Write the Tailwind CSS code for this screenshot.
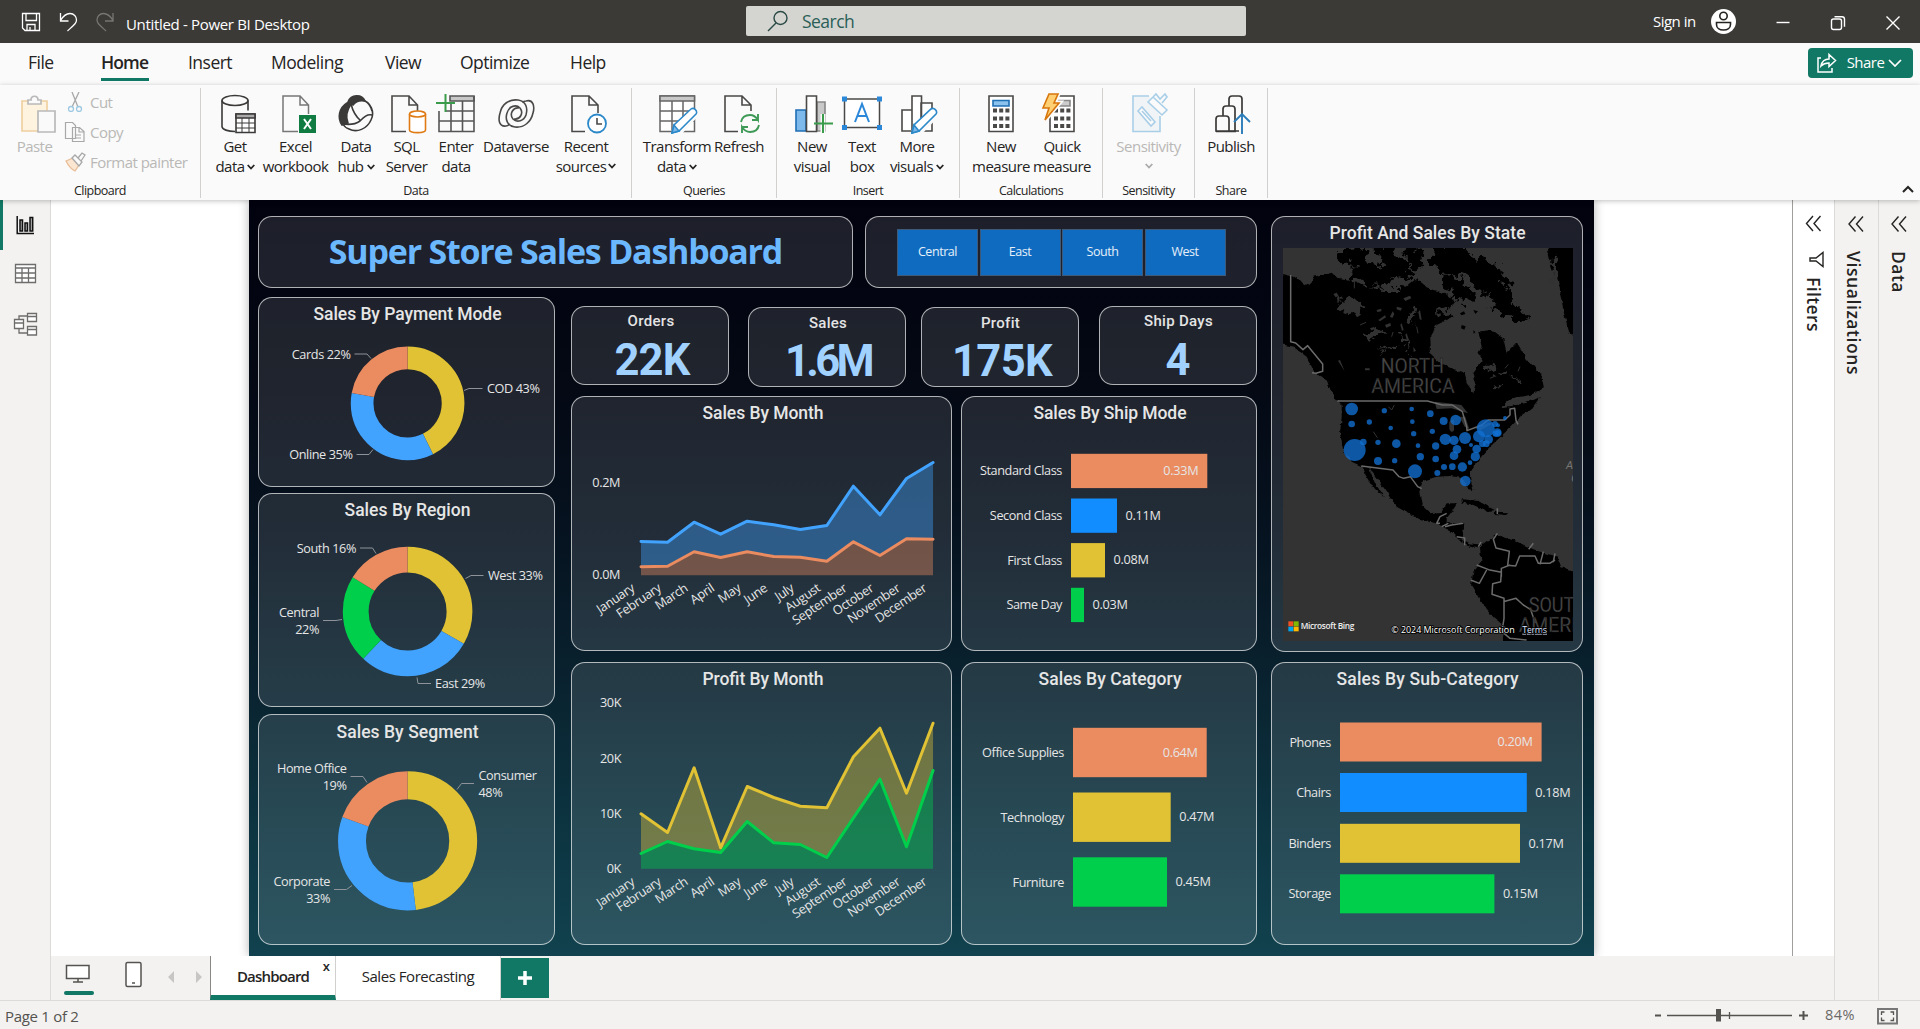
<!DOCTYPE html>
<html lang="en">
<head>
<meta charset="utf-8">
<title>Untitled - Power BI Desktop</title>
<script src="https://cdn.jsdelivr.net/npm/@tailwindcss/browser@4"></script>
</head>
<body class="w-[1920px] h-[1029px] overflow-hidden flex flex-col bg-[#f3f2f1] font-['Open_Sans','Noto_Sans',sans-serif] tracking-[-0.035em] text-[15px] text-[#252423]">

<!-- Title bar -->
<header class="h-[43px] shrink-0 bg-[#3b3a37] text-white flex items-center">
  <div class="w-[746px] flex items-center pl-[20px]">
    <svg class="w-[96px] h-[43px]" viewBox="20 0 96 43" fill="none" stroke="#fff" stroke-width="1.3"><path d="M22.500 13.500h17v17h-14.500l-2.500-2.500zM26 13.500v7h10.500v-7M27 30.500v-6h8v6M30 27v3"/><path d="M60.500 13v8h8M60.500 20.500c3-5 6-7 9.500-7 4 0 6.500 3 6.500 6.500 0 3-2 4.500-9 11"/><path stroke="#777673" d="M113 13v8h-8M113 20.500c-3-5-6-7-9.500-7-4 0-6.500 3-6.500 6.500 0 3 2 4.500 9 11"/></svg>
    <span class="pl-[10px] pt-[6px] whitespace-nowrap tracking-[-0.022em]">Untitled - Power BI Desktop</span>
  </div>
  <div class="w-[500px] h-[30px] rounded-[2px] bg-[#d4d4d1] flex items-center mb-[1px]">
    <svg class="ml-[20px] w-[24px] h-[24px]" viewBox="0 0 24 24" fill="none" stroke="#2b4a45" stroke-width="1.4"><circle cx="14.500" cy="9" r="6.500"/><path d="M10 14L2 22"/></svg>
    <span class="ml-[12px] text-[17.500px] text-[#2a5f57]">Search</span>
  </div>
  <div class="flex-1 flex items-center pl-[407px]">
    <span class="w-[57px] whitespace-nowrap">Sign in</span>
    <svg class="w-[210px] h-[43px]" viewBox="1710 0 210 43" fill="none" stroke="#fff" stroke-width="1.400"><circle cx="1723.500" cy="21.500" r="12.500" fill="#fff" stroke="none"/><g stroke="#252423" stroke-width="1.600"><circle cx="1723.500" cy="16" r="3.700"/><path d="M1716.500 22.500h14v2c0 3.500-3 5.500-7 5.500s-7-2-7-5.500z"/></g><path d="M1776.500 22.500h13"/><rect x="1831.500" y="19" width="10" height="10.500" rx="2"/><path d="M1834.500 16.700h7.500c1.500 0 2.500 1 2.500 2.500v7.500M1886.500 16.500l13 13M1899.500 16.500l-13 13"/></svg>
  </div>
</header>

<!-- Menu tabs -->
<nav class="h-[42px] shrink-0 bg-[#fafafa] flex items-start pl-[28px] pr-[7px] text-[17.500px] leading-[38px] whitespace-nowrap">
  <span class="w-[73px]">File</span>
  <span class="w-[48px] mr-[39px] h-[38px] font-semibold tracking-[-0.05em] border-b-[3px] border-[#117865]">Home</span>
  <span class="w-[83px]">Insert</span>
  <span class="w-[114px] tracking-[-0.028em]">Modeling</span>
  <span class="w-[75px]">View</span>
  <span class="w-[110px]">Optimize</span>
  <span class="flex-1">Help</span>
  <button class="mt-[5px] w-[105px] h-[30px] rounded-[4px] bg-[#117865] text-white text-[15px] leading-none flex items-center pl-[8px]">
    <svg class="w-[22px] h-[22px]" viewBox="0 0 22 22" fill="none" stroke="#fff" stroke-width="1.500"><path d="M5 6H2v14h14v-4M5 14c1-5 4-7 8-7V2.500l6.500 6L13 14.500V11c-4 0-6 1-8 3z"/></svg>
    <span class="ml-[8px] mb-[1px] w-[39px]">Share</span>
    <svg class="ml-[3px] w-[14px] h-[8px]" viewBox="0 0 14 8" fill="none" stroke="#fff" stroke-width="1.700"><path d="M1 1l6 6 6-6"/></svg>
  </button>
</nav>

<!-- Ribbon -->
<section class="relative z-10 h-[115px] shrink-0 bg-[#fafafa] flex items-start pt-[3px] leading-[20px] text-center shadow-[0_1px_5px_rgba(0,0,0,0.25)] whitespace-nowrap">
  <div class="w-[201px] h-[110px] border-r border-[#d2d0ce] flex flex-col">
    <div class="flex h-[94px] shrink-0 text-[#b9b8b6]">
      <div class="w-[60px] pl-[9px] flex flex-col items-center pt-[4px]">
        <svg class="w-[44px] h-[42px]" viewBox="13 92 44 42" fill="none" stroke-width="1.700"><path stroke="#f0cfa0" fill="#fdf3de" d="M22 101h25v30H22z"/><path stroke="#b9b9b9" fill="#fafafa" d="M28 104v-4h3c0-5 7-5 7 0h3v4zM38 111h17v21H38z"/></svg>
        <span class="mt-[1.500px]">Paste</span>
      </div>
      <div class="flex-1 flex flex-col gap-[10px] pt-[4px] pl-[4px] text-left tracking-[-0.035em]">
        <div class="flex items-center"><svg class="w-[22px] h-[20px] mr-[4px]" viewBox="0 0 22 20" fill="none" stroke-width="1.300"><path stroke="#a8a8a8" d="M8 0l6 15M15 0L8 15"/><g stroke="#9dc8e2"><circle cx="7" cy="17" r="2.500"/><circle cx="15" cy="17" r="2.500"/></g></svg>Cut</div>
        <div class="flex items-center"><svg class="w-[22px] h-[20px] mr-[4px]" viewBox="0 0 22 20" fill="#fafafa" stroke="#a8a8a8" stroke-width="1.200"><path d="M1.500.5h7l3 3v13h-10zM8.500 5.500h7l4.500 4v10H8.500zM15 5.500v4.500h5M11 13h6M11 16h6"/></svg>Copy</div>
        <div class="flex items-center"><svg class="w-[22px] h-[20px] mr-[4px]" viewBox="0 0 22 20" fill="#fafafa" stroke-width="1.300"><path stroke="#e9bd98" fill="#fbe6d2" d="M2 9l7-3 6 7-4 6c-4-2-7-6-9-10z"/><path stroke="#a8a8a8" d="M8 6l3-3 7 7-3 4zM14 6l4-5 3 2-4 6"/></svg>Format painter</div>
      </div>
    </div>
    <div class="text-[12.500px] leading-[18px]">Clipboard</div>
  </div>

  <div class="w-[431px] h-[110px] border-r border-[#d2d0ce] flex flex-col">
    <div class="flex h-[94px] shrink-0 pl-[9px] pt-[4px]">
      <div class="w-[50px] flex flex-col items-center"><svg class="w-[44px] h-[42px] mb-[1.500px]" viewBox="0 0 44 42" fill="none" stroke="#3b3a39" stroke-width="1.600"><ellipse cx="22" cy="8.500" rx="13" ry="5"/><path d="M9 8.500v26c0 3 6 5 13 5M35 8.500v10"/><path fill="#fff" d="M23 22h19v18.500H23z"/><path fill="#aaa" d="M23 22h19v4H23z"/><path stroke-width="1" d="M23 31h19M23 36h19M29 26v14M36 26v14"/></svg><span>Get</span><span class="flex items-center">data<svg class="ml-[2px] mt-[2px] w-[8px] h-[6px]" viewBox="0 0 8 6" fill="none" stroke="#252423" stroke-width="1.800"><path d="M.7 1L4 4.500 7.300 1"/></svg></span></div>
      <div class="w-[71px] flex flex-col items-center"><svg class="w-[44px] h-[42px] mb-[1.500px]" viewBox="0 0 44 42" fill="none" stroke="#777" stroke-width="1.500"><path d="M24 39.500H9V4h17l8.500 9v9M26 4v9h8.500"/><path fill="#107c41" stroke="none" d="M25 23h17v18H25z"/><path stroke="#fff" stroke-width="2" d="M30 27l7 10M37 27l-7 10"/></svg><span>Excel</span><span>workbook</span></div>
      <div class="w-[50px] flex flex-col items-center"><svg class="w-[44px] h-[42px] mb-[1.500px]" viewBox="0 0 44 42" fill="none" stroke="#3b3a39" stroke-width="1.600"><path fill="#3b3a39" d="M14 10c3-8 14-8 17-1-5-1-9 0-12 4zM13 11C5 16 3 26 8 33l6-2c-3-7-1-13 3-19z"/><path d="M28 8c9 2 13 12 9 20-4 9-14 13-22 9-3-1-5-3-6-5 7 1 13 0 17-3 4-4 7-7 12-6M17 12c2 8 5 13 10 17M31 9c4 2 6 6 7 10"/></svg><span>Data</span><span class="flex items-center">hub<svg class="ml-[3px] mt-[2px] w-[8px] h-[6px]" viewBox="0 0 8 6" fill="none" stroke="#252423" stroke-width="1.800"><path d="M.7 1L4 4.500 7.300 1"/></svg></span></div>
      <div class="w-[51px] flex flex-col items-center"><svg class="w-[44px] h-[42px] mb-[1.500px]" viewBox="1 0 44 42" fill="none" stroke="#4a4948" stroke-width="1.600"><path d="M22 39.500H8V4h17l8.500 9v6M25 4v9h8.500"/><g stroke="#e07b14" fill="#fff"><path d="M25.500 22v16c0 3.500 16 3.500 16 0V22"/><ellipse cx="33.500" cy="22" rx="8" ry="3"/></g></svg><span>SQL</span><span>Server</span></div>
      <div class="w-[48px] flex flex-col items-center"><svg class="w-[44px] h-[42px] mb-[1.500px]" viewBox="0 0 44 42" fill="none" stroke="#555" stroke-width="1.600"><path fill="#c8c8c8" d="M16 4h24v5H16z"/><path d="M40 4v35.500H5V19M5 29h35M12 19h28M17 12v27M28.500 9v30.500"/><path stroke="#3a9b4b" stroke-width="2" d="M11.500 2v18M2 11h19"/></svg><span>Enter</span><span>data</span></div>
      <div class="w-[72px] flex flex-col items-center"><svg class="w-[44px] h-[42px] mb-[1.500px]" viewBox="0 0 44 42" fill="none" stroke="#4a4948" stroke-width="1.600"><path d="M12 34c-7 1-8-6-6-13C8 12 15 7 24 8c8 1 10 8 8 15-2 6-9 8-13 4-4-5 0-12 6-11M32 9c7-2 9 5 7 12-2 9-9 15-18 14-8-1-10-8-8-14 2-7 9-9 13-5 4 5 0 12-6 11M12 34c2 0 3-1 4-2M32 9c-2 0-3 1-4 1"/></svg><span>Dataverse</span></div>
      <div class="w-[68px] flex flex-col items-center"><svg class="w-[44px] h-[42px] mb-[1.500px]" viewBox="0 0 44 42" fill="none" stroke="#4a4948" stroke-width="1.600"><path d="M21 39.500H8V4h17l9 9v8M25 4v9h9"/><circle cx="33" cy="31.500" r="9" fill="#fff" stroke="#2b88c9" stroke-width="1.800"/><path d="M33 26v6h5"/></svg><span>Recent</span><span class="flex items-center">sources<svg class="ml-[2px] mt-[1px] w-[8px] h-[6px]" viewBox="0 0 8 6" fill="none" stroke="#252423" stroke-width="1.800"><path d="M.7 1L4 4.500 7.300 1"/></svg></span></div>
    </div>
    <div class="text-[12.500px] leading-[18px]">Data</div>
  </div>

  <div class="w-[145px] h-[110px] border-r border-[#d2d0ce] flex flex-col">
    <div class="flex h-[94px] shrink-0 pl-[12px] pt-[4px]">
      <div class="w-[66px] flex flex-col items-center"><svg class="w-[44px] h-[42px] mb-[1.500px]" viewBox="0 0 44 42" fill="none" stroke="#666" stroke-width="1.500"><path fill="#fff" d="M5 4h34.500v35.500H5z"/><path fill="#c8c8c8" d="M5 4h34.500v5H5z"/><path d="M5 19h34M5 29h34M17 9v30M28 9v30"/><path stroke="#fafafa" stroke-width="10" d="M41 19L20 42"/><path fill="#fff" stroke="#2b88c9" d="M17 41l2-8 17-16c3-2 7 2 5 5L24 39z"/><path fill="#7db9ea" stroke="#2b88c9" d="M17 41l2-8 5 6z"/></svg><span>Transform</span><span class="flex items-center">data<svg class="ml-[3px] mt-[2px] w-[8px] h-[6px]" viewBox="0 0 8 6" fill="none" stroke="#252423" stroke-width="1.800"><path d="M.7 1L4 4.500 7.300 1"/></svg></span></div>
      <div class="w-[58px] flex flex-col items-center"><svg class="w-[44px] h-[42px] mb-[1.500px]" viewBox="0 0 44 42" fill="none" stroke="#4a4948" stroke-width="1.600"><path d="M21 39.500H8V4h17l9 9v6M25 4v9h9"/><g stroke="#3f9a57" stroke-width="1.900"><path d="M24 30c1-5 5-7 9-7 4 0 6 2 8 5v-6M41 28h-6M42 33c-1 5-5 7-9 7-4 0-6-2-8-5v6M25 35h6"/></g></svg><span>Refresh</span></div>
    </div>
    <div class="text-[12.500px] leading-[18px]">Queries</div>
  </div>

  <div class="w-[183px] h-[110px] border-r border-[#d2d0ce] flex flex-col">
    <div class="flex h-[94px] shrink-0 pl-[9px] pt-[4px]">
      <div class="w-[52px] flex flex-col items-center"><svg class="w-[44px] h-[42px] mb-[1.500px]" viewBox="0 0 44 42" fill="none" stroke="#4a4948" stroke-width="1.600"><path fill="#c8c8c8" stroke="#888" d="M27 10h8v29h-8z"/><path fill="#7db9ea" stroke="#1f6fb5" d="M6 18h10v21H6z"/><path fill="#fff" d="M16.500 4h10v35.500h-10z"/><path stroke="#fafafa" stroke-width="5" d="M33 22v20"/><path stroke="#3a9b4b" stroke-width="2" d="M33 22v19M24 31.500h19"/></svg><span>New</span><span>visual</span></div>
      <div class="w-[48px] flex flex-col items-center"><svg class="w-[44px] h-[42px] mb-[1.500px]" viewBox="0 0 44 42" fill="none" stroke="#4a4948" stroke-width="1.500"><path fill="#fff" d="M4.500 7h35v28.500h-35z"/><path fill="#2b88d8" stroke="none" d="M2 4.500h5v5H2zM37 4.500h5v5h-5zM2 33h5v5H2zM37 33h5v5h-5z"/><path stroke="#2b88d8" stroke-width="2" d="M15 30l7-18 7 18M17.500 24h9"/></svg><span>Text</span><span>box</span></div>
      <div class="w-[62px] flex flex-col items-center"><svg class="w-[44px] h-[42px] mb-[1.500px]" viewBox="0 0 44 42" fill="none" stroke="#4a4948" stroke-width="1.600"><path fill="#fff" d="M26 11h11v28H26zM7 18h10v21H7zM17 4h9.500v35.500H17z"/><path stroke="#fafafa" stroke-width="10" d="M42 19L20 42"/><path fill="#fff" stroke="#2b88c9" d="M17 41l2-8 17-16c3-2 7 2 5 5L24 39z"/><path fill="#7db9ea" stroke="#2b88c9" d="M17 41l2-8 5 6z"/></svg><span>More</span><span class="flex items-center">visuals<svg class="ml-[3px] mt-[2px] w-[8px] h-[6px]" viewBox="0 0 8 6" fill="none" stroke="#252423" stroke-width="1.800"><path d="M.7 1L4 4.500 7.300 1"/></svg></span></div>
    </div>
    <div class="text-[12.500px] leading-[18px]">Insert</div>
  </div>

  <div class="w-[143px] h-[110px] border-r border-[#d2d0ce] flex flex-col">
    <div class="flex h-[94px] shrink-0 pl-[11px] pt-[4px]">
      <div class="w-[60px] flex flex-col items-center"><svg class="w-[44px] h-[42px] mb-[1.500px]" viewBox="0 0 44 42" fill="none" stroke="#4a4948" stroke-width="1.600"><path fill="#fff" d="M10 4h24v35.500H10z"/><path fill="#8cc2ee" stroke="#1f6fb5" d="M14 8.500h16v5.500H14z"/><path stroke-width="4" stroke-dasharray="4 2.200" d="M14 18.500h17M14 26.500h17M14 34h17"/></svg><span>New</span><span>measure</span></div>
      <div class="w-[62px] flex flex-col items-center"><svg class="w-[44px] h-[42px] mb-[1.500px]" viewBox="0 0 44 42" fill="none" stroke="#4a4948" stroke-width="1.600"><path fill="#fff" d="M10 4h24v35.500H10z"/><path fill="#ccc" stroke="#888" d="M16 8.500h14v5.500H16z"/><path stroke-width="4" stroke-dasharray="4 2.200" d="M14 18.500h17M14 26.500h17M14 34h17"/><path fill="#ffd073" stroke="#fafafa" stroke-width="5" d="M9 2h9l-4 9h5L5 28l4-12H3z"/><path fill="#ffd073" stroke="#d7760c" d="M9 2h9l-4 9h5L5 28l4-12H3z"/></svg><span>Quick</span><span>measure</span></div>
    </div>
    <div class="text-[12.500px] leading-[18px]">Calculations</div>
  </div>

  <div class="w-[92px] h-[110px] border-r border-[#d2d0ce] flex flex-col">
    <div class="flex flex-col items-center h-[94px] shrink-0 pt-[4px] text-[#b9b8b6]"><svg class="w-[44px] h-[42px] mb-[1.500px]" viewBox="2 0 44 42" fill="none" stroke="#a9cfe8" stroke-width="1.600"><path fill="#f0f4f7" d="M24 4H8v35.500h27V24"/><path fill="#fafafa" d="M13 19l4-4 13 15-4 4zM17 19l9 10M23 10l5-5 14 13-5 5zM28 5l3-3 4 5 5-5 2 3-5 6"/></svg><span>Sensitivity</span><svg class="mt-[7px] w-[8px] h-[6px]" viewBox="0 0 8 6" fill="none" stroke="#aaa" stroke-width="1.800"><path d="M.7 1L4 4.500 7.300 1"/></svg></div>
    <div class="text-[12.500px] leading-[18px]">Sensitivity</div>
  </div>

  <div class="w-[73px] h-[110px] border-r border-[#d2d0ce] flex flex-col">
    <div class="flex flex-col items-center h-[94px] shrink-0 pt-[4px]"><svg class="w-[44px] h-[42px] mb-[1.500px]" viewBox="0 0 44 42" fill="#fafafa" stroke="#3b3a39" stroke-width="1.700"><path d="M20 39V7c0-2 1-3 3-3h7c2 0 3 1 3 3v32z"/><path d="M14 39V17c0-2 1-3 3-3h6c2 0 3 1 3 3v22z"/><path d="M7 39V27c0-2 1-3 3-3h7c2 0 3 1 3 3v12zM7 39.500h20"/><path stroke="#fafafa" stroke-width="6" d="M33 24v18"/><path fill="none" stroke="#2b7cb8" stroke-width="1.900" d="M33 42V22M25 30l8-8 8 8"/></svg><span>Publish</span></div>
    <div class="text-[12.500px] leading-[18px]">Share</div>
  </div>
  <svg class="ml-auto mr-[6px] mt-[97px] w-[12px] h-[8px]" viewBox="0 0 12 8" fill="none" stroke="#252423" stroke-width="2"><path d="M1 7l5-5 5 5"/></svg>
</section>

<!-- Work area -->
<main class="h-[800px] shrink-0 flex">
  <aside class="w-[51px] border-r border-[#dddbd9] shrink-0">
    <svg class="w-[50px] h-[150px]" viewBox="0 200 50 150" fill="none"><path fill="#117865" d="M0 200h3v50H0z"/><g stroke="#111" stroke-width="1.500"><path d="M17.200 216v17.500H34"/><path fill="#aaa" d="M20 220h2.500v11H20zM25 223h2.500v8H25zM30 217.500h2.700v13.500H30z"/></g><g stroke="#6e6d6b" stroke-width="1.300"><path fill="#fff" d="M15.500 264.500h20v18h-20z"/><path d="M15.500 268h20M15.500 273h20M15.500 278h20M22 268v14.500M28.500 268v14.500"/><path fill="#fff" d="M14.500 319.500h9v9h-9zM27.500 313.500h9v8h-9zM27.500 326.500h9v8.500h-9z"/><path d="M14.500 323h9M27.500 316.500h9M27.500 329.500h9M19 319v-3h8M19 329v4h8"/></g></svg>
  </aside>

  <div class="flex-1 flex flex-col">
    <div class="h-[755.500px] flex">
      <!-- Canvas -->
      <div class="w-[1741px] bg-white pl-[198px] overflow-hidden">
        <div class="w-[1345px] h-[756px] flex pl-[9px] pt-[16px] gap-[14px] bg-[linear-gradient(#01020e_0%,#040914_25%,#061320_45%,#0a2431_66%,#0c3340_82%,#12424f_100%)] shadow-[0_0_10px_rgba(0,0,0,0.3)] font-['Roboto',sans-serif] tracking-normal text-[#e4e4e4]">
          <div class="w-[999px] flex flex-col gap-[9px]">
            <div class="flex gap-[12px]">
              <div class="w-[595px] h-[72px] border border-white/65 rounded-[14px] bg-white/[0.115] flex items-center justify-center"><h1 class="pb-[2px] font-['Open_Sans',sans-serif] font-bold text-[34px] leading-none tracking-[-0.036em] text-[#6cb8ff] whitespace-nowrap">Super Store Sales Dashboard</h1></div>
              <div class="w-[392px] h-[72px] border border-white/65 rounded-[14px] bg-white/[0.115] flex gap-[1.500px] pl-[31px] pt-[12px] font-['Open_Sans',sans-serif] text-[12.500px] tracking-[-0.035em] text-white/90">
                <div class="w-[81px] h-[47px] border border-[#3f5a78] bg-[#0f6bc0] flex items-center justify-center">Central</div>
                <div class="w-[81px] h-[47px] border border-[#3f5a78] bg-[#0f6bc0] flex items-center justify-center">East</div>
                <div class="w-[81px] h-[47px] border border-[#3f5a78] bg-[#0f6bc0] flex items-center justify-center">South</div>
                <div class="w-[81px] h-[47px] border border-[#3f5a78] bg-[#0f6bc0] flex items-center justify-center">West</div>
              </div>
            </div>
            <div class="flex gap-[16px]">
              <div class="w-[297px] flex flex-col">
                <div class="h-[190px] mb-[6px] border border-white/65 rounded-[14px] bg-white/[0.115]"><svg id="payment" class="w-[295px] h-[188px]" viewBox="259 298.500 295 188"></svg></div>
                <div class="h-[214px] mb-[7px] border border-white/65 rounded-[14px] bg-white/[0.115]"><svg id="region" class="w-[295px] h-[212px]" viewBox="259 494.500 295 212"></svg></div>
                <div class="h-[231px] border border-white/65 rounded-[14px] bg-white/[0.115]"><svg id="segment" class="w-[295px] h-[229px]" viewBox="259 715.500 295 229"></svg></div>
              </div>
              <div class="w-[686px] flex flex-col pt-[9px]">
                <div class="flex h-[81px] text-center">
                  <div class="w-[158px] h-[79px] mr-[19px] border border-white/65 rounded-[14px] bg-white/[0.115]"><div class="pt-[5px] pl-[2px] text-[15px] leading-[19px] font-medium tracking-[0.02em]">Orders</div><div class="pt-[8px] pl-[4px] text-[43.500px] leading-[44px] font-bold tracking-[-0.02em] text-[#a0d1ff]">22K</div></div>
                  <div class="w-[158px] h-[80px] mt-[1px] mr-[15px] border border-white/65 rounded-[14px] bg-white/[0.115]"><div class="pt-[6px] pl-[2px] text-[15px] leading-[19px] font-medium tracking-[0.02em]">Sales</div><div class="pt-[7px] pl-[2px] text-[43.500px] leading-[44px] font-bold tracking-[-0.085em] text-[#a0d1ff]">1.6M</div></div>
                  <div class="w-[158px] h-[80px] mt-[1px] mr-[20px] border border-white/65 rounded-[14px] bg-white/[0.115]"><div class="pt-[6px] pl-[1px] text-[15px] leading-[19px] font-medium tracking-[0.02em]">Profit</div><div class="pt-[7px] pl-[4px] text-[43.500px] leading-[44px] font-bold tracking-[-0.015em] text-[#a0d1ff]">175K</div></div>
                  <div class="w-[158px] h-[79px] border border-white/65 rounded-[14px] bg-white/[0.115]"><div class="pt-[5px] pl-[1px] text-[15px] leading-[19px] font-medium tracking-[0.02em]">Ship Days</div><div class="pt-[8px] text-[43.500px] leading-[44px] font-bold text-[#a0d1ff]">4</div></div>
                </div>
                <div class="flex gap-[9px] mt-[9px]">
                  <div class="w-[381px] h-[255px] border border-white/65 rounded-[14px] bg-white/[0.115]"><svg id="sales" class="w-[379px] h-[253px]" viewBox="572 397.500 379 253"></svg></div>
                  <div class="w-[296px] h-[255px] border border-white/65 rounded-[14px] bg-white/[0.115]"><svg id="ship" class="w-[294px] h-[253px]" viewBox="962 397.500 294 253"></svg></div>
                </div>
                <div class="flex gap-[9px] mt-[11px]">
                  <div class="w-[381px] h-[283px] border border-white/65 rounded-[14px] bg-white/[0.115]"><svg id="profit" class="w-[379px] h-[281px]" viewBox="572 663.500 379 281"></svg></div>
                  <div class="w-[296px] h-[283px] border border-white/65 rounded-[14px] bg-white/[0.115]"><svg id="category" class="w-[294px] h-[281px]" viewBox="962 663.500 294 281"></svg></div>
                </div>
              </div>
            </div>
          </div>
          <div class="w-[312px] flex flex-col gap-[10px]">
            <div class="h-[436px] border border-white/65 rounded-[14px] bg-white/[0.115]">
              <svg class="w-[310px] h-[31px]" viewBox="1272 217 310 31"><text x="1427.500" y="239" text-anchor="middle" font-size="17.500" font-weight="500" fill="#e6e6e6" textLength="196">Profit And Sales By State</text></svg>
              <svg class="ml-[11px] w-[290px] h-[393px]" viewBox="69 114 870 1179" id="map">
                <defs><filter id="coast" x="0" y="0" width="100%" height="100%"><feTurbulence type="fractalNoise" baseFrequency="0.035" numOctaves="4" seed="4"/><feDisplacementMap in="SourceGraphic" scale="60" xChannelSelector="R" yChannelSelector="G"/></filter>
                <filter id="coastFine" x="0" y="0" width="100%" height="100%"><feTurbulence type="fractalNoise" baseFrequency="0.05" numOctaves="3" seed="9"/><feDisplacementMap in="SourceGraphic" scale="14" xChannelSelector="R" yChannelSelector="G"/></filter></defs>
                <path fill="#333" d="M69 114h870v1179H69z"/>
                <g filter="url(#coastFine)">
                  <path d="M40 187L95 198 125 215 147 228 160 200 190 192 215 185 240 208 290 215 330 235 370 238 400 225 440 230 470 205 500 232 520 240 555 250 585 275 568 300 580 320 530 345 508 385 510 430 545 462 590 480 615 490 620 520 640 547 648 520 640 490 668 450 655 430 665 410 655 365 690 360 730 385 740 430 770 400 795 440 830 480 850 510 855 535 810 555 755 565 720 592 755 588 800 578 840 562 812 600 780 620 755 648 722 680 690 710 660 745 632 785 630 800 640 840 625 838 610 805 570 798 530 800 490 812 478 845 485 885 510 910 545 905 560 880 592 880 575 905 560 925 560 940 610 940 605 990 630 1000 665 1005 650 1012 610 1000 575 965 530 940 480 930 410 890 385 850 350 800 325 770 332 790 350 830 372 862 345 840 320 800 308 770 275 755 250 720 240 670 245 620 245 585 215 550 200 510 165 490 140 440 100 410 40 398z"/>
                  <path d="M862 105h90v285l-25-25-15-55-10-50-5-50-20-30-10-40zM660 1012l48-38 52 16 60 28 72 22 12 32 50 14v220H728l10-54-38-30-30-40-36-60 6-40 24-28z"/>
                  <path d="M605 868l50 5 50 28-25 2-40-18-35-8zM706 905l35 2-2 8-36-3z"/>
                </g>
                <g filter="url(#coast)">
                  <path d="M232 118l80-4 10 40 55 20 20 40-60 20-75-25 25-35-55-20zM330 110h80l10 30 40 60-45 15-40-25-5-35zM440 110l35-2 15 55-25 25-30-30zM520 105h90l30 30 60 30 40 50 20 60 45 50-15 20-60-35-40-10 10-40-40-10-20-45-60-20-45 5-20-40z"/>
                  <path d="M560 190l45 15 45 65-40 10-55-40z"/>
                  <path fill="#333" d="M240 270l50-5 20 30-40 15-25-15zM300 380l65-30 10 15-50 30zM345 220l60 5 20 15-60 0zM350 425l70-15-5 12zM410 360l25 30 10 50-15-40zM440 310l20-20 10 5-15 50zM540 300l30-10 5 20-40 5zM680 470l14-10 8 22-16 8zM720 500l16-20 8 16zM760 510l18-12 4 14zM700 530l20-5-5 15zM870 140l18 0 6 60-14 20z"/>
                </g>
                <g fill="#333"><path d="M524 575l40 5 40 5 20 25-50-15-44 2zM568 636c4-8 12-10 14-5v30c-4 8-12 4-14-5zM598 620l18 0 12 38-14-8zM648 655l38-17 10 3-35 20zM240 450l14 34-20-32zM315 475h14v6h-14zM700 492l10 8-12-1z"/><path d="M220 252l10-4 6 10-9 4zM252 300l12 4-6 9-8-4zM285 312l10-6 8 8-12 8zM355 330l20-14 3 6-18 12zM375 345l16-6 2 8-14 6zM390 320l8-16 5 8-6 12zM350 300l14-4 0 8-12 2zM410 290l16 4-4 8-12-4zM425 340l6 20-5 2-5-18zM440 370l6 18-6 0-4-14zM330 355l12-4 4 6-12 4zM430 265l20-8 4 8-18 8zM480 300l5 30-6-2-4-22zM460 410l8 12-7 4zM670 240l12-6-2 14-9 2z"/><path fill="none" stroke="#333" stroke-width="3" d="M385 590l10 10 8-15M340 665l12 18M283 205v30M300 345l18-8M395 380l4-14M470 350l4 20M735 475l10-12M690 505l14-6M780 470l-6 14"/></g>
                <g fill="#000"><path d="M670 230l12-4 2 16-12 6zM605 345l12 4-4 10-10-4zM640 360l6 6-5 6zM690 250l10 10-6 6zM706 280l10 8-8 6zM600 310l12-6 4 8-12 4zM640 300l14 4-8 8zM740 210l8 10-6 4zM720 180l12 8-6 6zM790 590l22-6 2 14-20 6z"/></g>
                <g fill="none" stroke="#6b6b6b" stroke-width="4.500" stroke-linejoin="round"><path d="M92 195v200l15 4 22 20 14-12 45 55v22l-20 6-12-2"/><path d="M232 573h270l45 12 30 0 30 20 13 45 1 12 45-17 18-15h50l16-15 0-18 14-2 4 36 6 12"/><path d="M304 768l95 12 18 20 14 5 20-5 22 30 12 6M540 940l-10 0 10-20 20-10M545 950l20-10M555 950l20-5 35-5M590 980l24 4 0 22M655 1010l8-14M712 895v18"/><path d="M712 970l-12 18 8 26 40 10-5 42 24 2 12-30 30 0 16 0 10 22 14 0 20 0 16-10M820 1000l-14 18M850 1025l-10 38M885 1030l-5 26M650 1065l36 14 38 8-2 28-24 6-2 32 36 12 0 60-6 40 24 20 50 5M730 1175l38-10 22 20 22 14 14 40M680 1080l-22 40-26-10M750 1065l-26 10 0 25"/></g>
                <g fill="#484848" font-family="Roboto" font-size="61" stroke="#111" stroke-width="1"><text x="362" y="488" textLength="190" lengthAdjust="spacingAndGlyphs">NORTH</text><text x="334" y="548" textLength="250" lengthAdjust="spacingAndGlyphs">AMERICA</text><text x="806" y="1206" textLength="176" lengthAdjust="spacingAndGlyphs">SOUTH</text><text x="776" y="1266" textLength="250" lengthAdjust="spacingAndGlyphs">AMERICA</text></g>
                <g fill="#777" font-family="Roboto" font-style="italic" font-size="34"><text x="918" y="777">A</text><text x="934" y="815">C</text></g>
                <g id="bubbles" fill="#1170d2" fill-opacity=".78"></g>
                <path fill="#f25022" d="M85 1234h15v15H85z"/><path fill="#7fba00" d="M101 1234h15v15h-15z"/><path fill="#00a4ef" d="M85 1250h15v14H85z"/><path fill="#ffb900" d="M101 1250h15v14h-15z"/>
                <g font-family="Open Sans" fill="#eee"><text x="122" y="1257" font-size="25" font-weight="600" textLength="161">Microsoft Bing</text><g stroke="#000" stroke-width="5" paint-order="stroke" font-size="27" fill="#fff"><text x="394" y="1268" textLength="370">© 2024 Microsoft Corporation</text><text x="787" y="1268" textLength="74" text-decoration="underline" fill="#dfe6ff">Terms</text></g></g>
              </svg>
            </div>
            <div class="h-[283px] border border-white/65 rounded-[14px] bg-white/[0.115]"><svg id="subcat" class="w-[310px] h-[281px]" viewBox="1272 663.500 310 281"></svg></div>
          </div>
        </div>
      </div>
      <div class="w-[42px] bg-white border-l border-[#a19f9d]">
        <svg class="w-[41px] h-[300px]" viewBox="1793 200 41 300" fill="none" stroke="#252423" stroke-width="1.400"><path d="M1813 216l-6.500 7.500 6.500 7.500M1820.500 216l-6.500 7.500 6.500 7.500M1823 252.500v14l-7-5.500h-6v-3h6z"/><text transform="translate(1807 277) rotate(90)" stroke="none" fill="#252423" font-size="17.500" font-weight="600" textLength="54">Filters</text></svg>
      </div>
    </div>
    <!-- Page tabs -->
    <div class="h-[44.500px] flex items-start">
      <svg class="w-[159px] h-[44px]" viewBox="51 956 159 44" fill="none" stroke="#55534f" stroke-width="1.500"><path fill="#fff" d="M66.500 965.500h22.500v13H66.500z"/><path d="M78 978.500v3M73 982h10"/><rect x="64" y="991" width="30" height="4" rx="2" fill="#117865" stroke="none"/><rect x="126" y="962.500" width="15" height="24" rx="1.500" fill="#fff"/><path d="M132 983h3"/><path fill="#c8c6c4" stroke="none" d="M174 971v12l-6-6zM196 971v12l6-6z"/></svg>
      <div class="relative w-[126px] h-[44px] bg-white border-l border-r border-l-[#8a8886] border-r-[#d2d0ce] border-b-[5px] border-b-[#117865] text-center leading-[41px] font-semibold tracking-[-0.055em]">Dashboard<span class="absolute right-[6px] top-[2px] text-[13px] leading-[17px]">x</span></div>
      <div class="w-[165px] h-[44px] bg-white border-r border-[#d2d0ce] text-center leading-[41px] tracking-[-0.03em]">Sales Forecasting</div>
      <div class="mt-[2px] w-[48px] h-[40px] bg-[#117865] flex items-center justify-center"><svg class="w-[14px] h-[14px]" viewBox="0 0 14 14" stroke="#fff" stroke-width="3.500"><path d="M7 0v14M0 7h14"/></svg></div>
    </div>
  </div>
  <div class="w-[44px] border-l border-[#dddbd9]">
    <svg class="w-[43px] h-[300px]" viewBox="1835 200 43 300" fill="none" stroke="#252423" stroke-width="1.400"><path d="M1855.500 216.500l-6.500 7.500 6.500 7.500M1863 216.500l-6.500 7.500 6.500 7.500"/><text transform="translate(1847 251) rotate(90)" stroke="none" fill="#252423" font-size="17.500" font-weight="600" textLength="123">Visualizations</text></svg>
  </div>
  <div class="w-[42px] border-l border-[#dddbd9]">
    <svg class="w-[41px] h-[300px]" viewBox="1879.500 200 41 300" fill="none" stroke="#252423" stroke-width="1.400"><path d="M1899 216.500l-6.500 7.500 6.500 7.500M1906.500 216.500l-6.500 7.500 6.500 7.500"/><text transform="translate(1892 251) rotate(90)" stroke="none" fill="#252423" font-size="17.500" font-weight="600" textLength="41">Data</text></svg>
  </div>
</main>

<!-- Status bar -->
<footer class="h-[29px] shrink-0 border-t border-[#dddbd9] flex items-center justify-between pl-[5px] text-[#55534f]">
  <span class="pt-[2px] tracking-[-0.02em]">Page 1 of 2</span>
  <svg class="w-[270px] h-[28px]" viewBox="1650 1001 270 28" fill="none" stroke="#55534f" stroke-width="1.300"><path stroke-width="2" d="M1655 1015.500h6M1799 1015.500h9M1803.500 1011v9"/><path d="M1667 1015.500h125M1729.500 1012v7"/><path fill="#55534f" stroke="none" d="M1716 1009h5v12.500h-5z"/><text x="1825" y="1020" stroke="none" fill="#6b6967" font-size="14.500" textLength="29">84%</text><path stroke="#777" stroke-width="2" d="M1878 1009h19v14.500h-19z"/><path d="M1884.500 1012h-3v3M1890.500 1012h3v3M1884.500 1020.500h-3v-3M1890.500 1020.500h3v-3"/></svg>
</footer>

<script>
const NS = 'http://www.w3.org/2000/svg';
const YELLOW = '#e0c234', BLUE = '#42a3ff', ORANGE = '#ea8b60', GREEN = '#00cf4c', STRONG = '#118dff';

function add(parent, tag, attrs, text) {
  const el = document.createElementNS(NS, tag);
  for (const k in attrs) el.setAttribute(k, attrs[k]);
  if (text) el.textContent = text;
  parent.appendChild(el);
  return el;
}
const chart = id => document.getElementById(id);
function title(svg, x, y, text, len) {
  add(svg, 'text', {x, y, 'text-anchor': 'middle', 'font-size': 17.5, 'font-weight': 500, fill: '#e6e6e6', textLength: len}, text);
}
function label(svg, x, y, text, anchor = 'start', extra = {}) {
  add(svg, 'text', Object.assign({x, y, 'text-anchor': anchor, 'font-family': 'Open Sans', 'font-size': 12.7, 'letter-spacing': -0.4, fill: '#e6e6e6'}, extra), text);
}
function donut(svg, cx, cy, r, w, slices) {
  let start = 0;
  for (const [end, color] of slices) {
    add(svg, 'circle', {cx, cy, r, fill: 'none', stroke: color, 'stroke-width': w, pathLength: 100,
      'stroke-dasharray': `${end - start} ${100 - end + start}`, 'stroke-dashoffset': -start, transform: `rotate(-90 ${cx} ${cy})`});
    start = end;
  }
}
function leader(svg, points) {
  add(svg, 'polyline', {points, fill: 'none', stroke: '#8d9398', 'stroke-width': 1});
}

let s = chart('payment');
title(s, 407.5, 320, 'Sales By Payment Mode', 188);
donut(s, 407.6, 403.8, 45.5, 22.7, [[42.6, YELLOW], [77.9, BLUE], [100, ORANGE]]);
label(s, 350.5, 359.5, 'Cards 22%', 'end'); leader(s, '354.500,354.500 367,354.500 371,359');
label(s, 487, 393.5, 'COD 43%'); leader(s, '464,391 469,389 482.500,389');
label(s, 352.5, 459.5, 'Online 35%', 'end'); leader(s, '356.500,455 369,455 373,450');

s = chart('region');
title(s, 407.5, 516, 'Sales By Region', 126);
donut(s, 407.6, 612, 51.9, 25.8, [[33.3, YELLOW], [62, BLUE], [83.9, GREEN], [100, ORANGE]]);
label(s, 356, 553.5, 'South 16%', 'end'); leader(s, '360,548.500 372.500,548.500 376,554');
label(s, 488, 580.5, 'West 33%'); leader(s, '465.500,579 471,576 483.500,576');
label(s, 435, 688.5, 'East 29%'); leader(s, '417,678 418,684 431,684');
label(s, 319, 617.5, 'Central', 'end'); label(s, 319, 634.5, '22%', 'end'); leader(s, '323,621 336,621 342,620');

s = chart('segment');
title(s, 407.5, 738, 'Sales By Segment', 142);
donut(s, 407.6, 841.4, 55.6, 27.9, [[48.1, YELLOW], [80.6, BLUE], [100, ORANGE]]);
label(s, 346.5, 773.5, 'Home Office', 'end'); label(s, 346.5, 790.5, '19%', 'end'); leader(s, '350.500,777 363,777 367,783');
label(s, 478.5, 780.5, 'Consumer'); label(s, 478.5, 797.5, '48%'); leader(s, '457,790 461.500,784 474,784');
label(s, 330, 886.5, 'Corporate', 'end'); label(s, 330, 903.5, '33%', 'end'); leader(s, '334,890 346.500,890 352,886');

const MONTHS = ['January', 'February', 'March', 'April', 'May', 'June', 'July', 'August', 'September', 'October', 'November', 'December'];
function area(svg, base, upper, lower, colorUp, colorLow) {
  const px = i => 641 + i * 26.55;
  const up = upper.map((v, i) => `${px(i)},${v}`), low = lower.map((v, i) => `${px(i)},${v}`);
  add(svg, 'polygon', {points: [...up, ...low.slice().reverse()].join(' '), fill: colorUp, 'fill-opacity': .4});
  add(svg, 'polygon', {points: [...low, `933,${base}`, `641,${base}`].join(' '), fill: colorLow, 'fill-opacity': .4});
  add(svg, 'polyline', {points: up.join(' '), fill: 'none', stroke: colorUp, 'stroke-width': 3, 'stroke-linecap': 'round', 'stroke-linejoin': 'round'});
  add(svg, 'polyline', {points: low.join(' '), fill: 'none', stroke: colorLow, 'stroke-width': 3, 'stroke-linecap': 'round', 'stroke-linejoin': 'round'});
  MONTHS.forEach((m, i) => label(svg, 0, 0, m, 'end', {'letter-spacing': -0.3, transform: `translate(${635.5 + i * 26.55} ${base + 15}) rotate(-34)`}));
}
s = chart('sales');
title(s, 763, 419, 'Sales By Month', 121);
label(s, 620, 487.5, '0.2M', 'end'); label(s, 620, 579.5, '0.0M', 'end');
area(s, 575.7, [542, 542.7, 522.7, 534.7, 521.7, 525.3, 530, 526, 486.7, 515.3, 479, 463],
  [567.3, 566.7, 552.3, 558, 552.3, 557, 557.7, 561.7, 542.3, 556, 539.3, 539.7], BLUE, ORANGE);
s = chart('profit');
title(s, 763, 685, 'Profit By Month', 121);
[['30K', 707.5], ['20K', 763.5], ['10K', 818.5], ['0K', 873.5]].forEach(([t, y]) => label(s, 621, y, t, 'end'));
area(s, 869.3, [814.3, 833, 768.3, 848.3, 787, 798, 806.7, 808.3, 757.3, 728.7, 793.7, 723.7],
  [854, 842, 849.3, 853, 822, 843.3, 845, 858, 818.3, 779.7, 847.3, 771], YELLOW, GREEN);

function bars(svg, x, h, rows) {
  for (const [name, value, y, end, color, inside] of rows) {
    add(svg, 'rect', {x, y, width: end - x, height: h, fill: color});
    label(svg, x - 9, y + h / 2 + 4.5, name, 'end');
    label(svg, inside ? end - 9 : end + 8.5, y + h / 2 + 4.2, value, inside ? 'end' : 'start', {'letter-spacing': -0.3});
  }
}
s = chart('ship');
title(s, 1110, 419, 'Sales By Ship Mode', 153);
bars(s, 1071, 34.3, [['Standard Class', '0.33M', 454.3, 1207.3, ORANGE, true], ['Second Class', '0.11M', 499, 1117, STRONG], ['First Class', '0.08M', 543.6, 1105, YELLOW], ['Same Day', '0.03M', 588.3, 1084, GREEN]]);
s = chart('category');
title(s, 1110, 685, 'Sales By Category', 143);
bars(s, 1073, 49.4, [['Office Supplies', '0.64M', 728.3, 1206.7, ORANGE, true], ['Technology', '0.47M', 793, 1170.7, YELLOW], ['Furniture', '0.45M', 857.8, 1167, GREEN]]);
s = chart('subcat');
title(s, 1427.500, 685, 'Sales By Sub-Category', 182);
bars(s, 1340, 39, [['Phones', '0.20M', 723, 1541.6, ORANGE, true], ['Chairs', '0.18M', 773.5, 1526.8, STRONG], ['Binders', '0.17M', 824.3, 1520, YELLOW], ['Storage', '0.15M', 874.8, 1494.4, GREEN]]);

[[275,597,19],[275,642,10],[373,602,8],[328,636,8],[392,654,7],[455,597,7],[457,635,7],[461,671,8],[511,611,10],[551,633,12],[587,630,16],[517,664,8],[284,720,33],[310,696,10],[354,697,8],[409,701,13],[474,707,7],[354,753,12],[404,752,8],[481,740,11],[465,784,21],[527,708,11],[527,747,10],[556,688,17],[582,691,14],[615,684,18],[591,718,13],[582,737,13],[552,771,9],[577,770,10],[607,771,14],[532,789,9],[616,813,16],[630,758,7],[646,740,14],[650,717,13],[633,705,6],[657,679,18],[677,655,27],[686,688,13],[667,701,10],[679,701,10],[705,642,9],[714,646,6],[712,668,13],[706,671,9],[714,669,9],[735,624,6]]
  .forEach(([cx, cy, r]) => add(chart('bubbles'), 'circle', {cx, cy, r}));
</script>
</body>
</html>
